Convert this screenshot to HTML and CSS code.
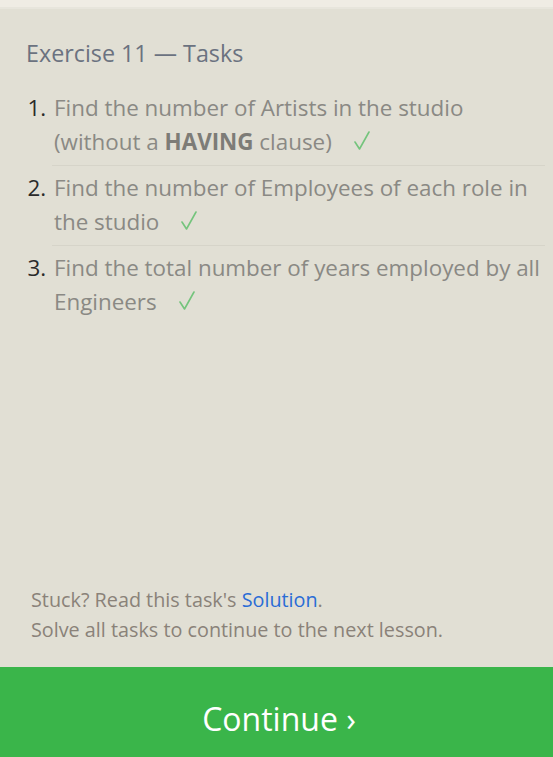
FILE: index.html
```html
<!DOCTYPE html>
<html>
<head>
<meta charset="utf-8">
<link rel="stylesheet" href="styles.css">
</head>
<body>
<div class="page">
  <div class="topbar"></div>
  <div class="panel">
    <h2 class="title">Exercise 11 — Tasks</h2>
    <ol class="tasks">
      <li class="task">Find the number of Artists in the studio (without a <b>HAVING</b> clause)<svg class="check" viewBox="0 0 17 19" width="17" height="19"><path d="M2 11 L6.5 18 L16 1" /></svg></li>
      <li class="task">Find the number of Employees of each role in the studio<svg class="check" viewBox="0 0 17 19" width="17" height="19"><path d="M2 11 L6.5 18 L16 1" /></svg></li>
      <li class="task last">Find the total number of years employed by all Engineers<svg class="check" viewBox="0 0 17 19" width="17" height="19"><path d="M2 11 L6.5 18 L16 1" /></svg></li>
    </ol>
    <div class="spacer"></div>
    <div class="help">
      <div>Stuck? Read this task's <a class="link" href="#">Solution</a>.</div>
      <div>Solve all tasks to continue to the next lesson.</div>
    </div>
  </div>
  <div class="continue">Continue ›</div>
</div>
</body>
</html>
```
FILE: styles.css
```css
html, body {
  margin: 0;
  padding: 0;
}
body {
  font-family: "Open Sans", "Noto Sans", sans-serif;
  background: #e1dfd4;
}
.page {
  display: flex;
  flex-direction: column;
  height: 757px;
}
.topbar {
  height: 7px;
  background: #efece4;
  border-bottom: 2px solid #e7e5dc;
}
.panel {
  flex: 1;
  display: flex;
  flex-direction: column;
  padding: 0 8px 0 26px;
}
.title {
  margin: 28px 0 0 0;
  font-size: 23.3px;
  font-weight: 400;
  color: #6b7280;
  line-height: 32px;
}
.tasks {
  margin: 17px 0 0 0;
  padding: 0 0 0 26px;
  list-style: decimal;
}
.task {
  font-size: 22.4px;
  line-height: 34px;
  color: #8a8984;
  border-bottom: 1px solid #d6d4c9;
  padding: 5px 0 6px 2px;
}
.task::marker {
  color: #2a2a2a;
}
.task.last {
  border-bottom: none;
}
.task b {
  font-weight: 700;
  color: #7d7c77;
}
.check {
  margin-left: 21px;
  vertical-align: 0;
  fill: none;
  stroke: #74c47c;
  stroke-width: 1.6;
  stroke-linecap: round;
  stroke-linejoin: round;
}
.spacer {
  flex: 1;
}
.help {
  font-size: 19.8px;
  line-height: 30px;
  color: #8a8279;
  padding-left: 5px;
  margin-bottom: 22px;
}
.link {
  color: #2a6cd6;
  text-decoration: none;
}
.continue {
  height: 90px;
  box-sizing: border-box;
  padding: 14px 0 0 5px;
  line-height: 76px;
  text-align: center;
  background: #3ab54a;
  color: #fff;
  font-size: 32px;
}
```
